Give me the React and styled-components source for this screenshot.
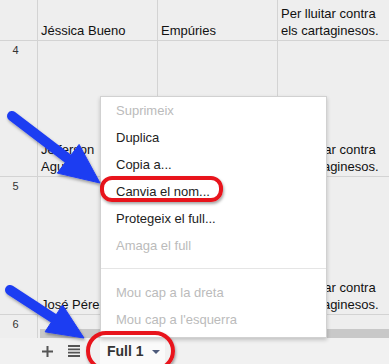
import React from 'react';
import styled, { createGlobalStyle } from 'styled-components';

const GlobalStyle = createGlobalStyle`
  html, body {
    margin: 0;
    padding: 0;
    overflow: hidden;
    background: #f1f1f1;
  }
  body {
    font-family: "Liberation Sans", Arial, sans-serif;
  }
`;

const Page = styled.div`
  position: relative;
  width: 389px;
  height: 364px;
  overflow: hidden;
  display: flex;
  flex-direction: column;
  background: #eeeeee;
`;

const Sheet = styled.div`
  display: grid;
  grid-template-columns: 38px 120px 120px 120px;
  grid-template-rows: ${({ rows }) => rows.map((h) => `${h}px`).join(' ')};
  width: 389px;
  overflow: hidden;
`;

const RowHead = styled.div`
  box-sizing: border-box;
  border-right: 1px solid #d3d3d3;
  border-bottom: 1px solid #d3d3d3;
  font-size: 11px;
  color: #333;
  text-align: center;
  padding: 3px 6px 0 0;
`;

const Cell = styled.div`
  box-sizing: border-box;
  border-right: 1px solid #d3d3d3;
  border-bottom: 1px solid #d3d3d3;
  font-size: 13px;
  line-height: 17px;
  color: #111;
  padding: 0 3px 1px 3px;
  display: flex;
  flex-direction: column;
  justify-content: flex-end;
  overflow: hidden;
`;

const ScrollRow = styled.div`
  display: flex;
  height: 9px;
`;

const Gutter = styled.div`
  width: 38px;
  box-sizing: border-box;
  border-right: 1px solid #d3d3d3;
`;

const Track = styled.div`
  flex: 1;
  margin-left: 2px;
  background: #c8c8c8;
`;

const TabBar = styled.div`
  flex: 1;
  display: flex;
  align-items: center;
  gap: 3px;
  background: #f1f1f1;
  padding-left: 35px;
`;

const BarIcon = styled.div`
  width: 24px;
  height: 26px;
  display: flex;
  align-items: center;
  justify-content: center;
  color: #555;
`;

const Tab = styled.div`
  margin-left: 11px;
  height: 26px;
  width: 65px;
  box-sizing: border-box;
  padding-left: 7px;
  background: #fafafa;
  display: flex;
  align-items: center;
  gap: 8px;
  font-size: 14px;
  font-weight: bold;
  color: #333;
`;

const Caret = styled.span`
  width: 0;
  height: 0;
  border-left: 4px solid transparent;
  border-right: 4px solid transparent;
  border-top: 4px solid #4d5a7a;
  margin-top: 2px;
`;

const Menu = styled.div`
  position: absolute;
  left: 100px;
  top: 96px;
  width: 227px;
  height: 242px;
  box-sizing: border-box;
  background: #fff;
  border: 1px solid rgba(0, 0, 0, 0.18);
  box-shadow: 0 2px 4px rgba(0, 0, 0, 0.2);
  padding: 0 0 5px;
`;

const Item = styled.div`
  height: 27px;
  line-height: 27px;
  padding-left: 15px;
  font-size: 13px;
  color: ${({ disabled }) => (disabled ? '#bbbbbb' : '#222')};
`;

const Separator = styled.div`
  border-top: 1px solid #e5e5e5;
  margin: 9px 0 10px;
`;

const Highlight = styled.div`
  position: absolute;
  left: ${({ x }) => x}px;
  top: ${({ y }) => y}px;
  width: ${({ w }) => w}px;
  height: ${({ h }) => h}px;
  box-sizing: border-box;
  border: 4px solid #e8141c;
  border-radius: ${({ r }) => r}px;
  box-shadow: 1px 2px 3px rgba(0, 0, 0, 0.35);
  pointer-events: none;
`;

const Overlay = styled.svg`
  position: absolute;
  left: 0;
  top: 0;
  pointer-events: none;
`;

const rows = [
  { n: '', h: 41, cells: [['Jéssica Bueno'], ['Empúries'], ['Per lluitar contra els cartaginesos.']] },
  { n: '4', h: 136, cells: [['Jefferson', 'Aguilar'], ['Empúries'], ['Per lluitar contra els cartaginesos.']] },
  { n: '5', h: 138, cells: [['José Pérez'], ['Empúries'], ['Per lluitar contra els cartaginesos.']] },
  { n: '6', h: 15, cells: [[], [], []] },
];

const menuTop = [
  { label: 'Suprimeix', disabled: true },
  { label: 'Duplica' },
  { label: 'Copia a...' },
  { label: 'Canvia el nom...' },
  { label: 'Protegeix el full...' },
  { label: 'Amaga el full', disabled: true },
];

const menuBottom = [
  { label: 'Mou cap a la dreta', disabled: true },
  { label: "Mou cap a l'esquerra", disabled: true },
];

const Arrow = ({ tail, tip, len, half, width }) => {
  const dx = tip[0] - tail[0];
  const dy = tip[1] - tail[1];
  const d = Math.hypot(dx, dy);
  const ux = dx / d;
  const uy = dy / d;
  const bx = tip[0] - ux * len;
  const by = tip[1] - uy * len;
  const px = -uy;
  const py = ux;
  const head = [
    [tip[0], tip[1]],
    [bx + px * half, by + py * half],
    [bx - px * half, by - py * half],
  ]
    .map((p) => p.join(','))
    .join(' ');
  return (
    <g fill="#1e3cf2" stroke="#1e3cf2" filter="url(#shade)">
      <line x1={tail[0]} y1={tail[1]} x2={bx + ux * 4} y2={by + uy * 4} strokeWidth={width} strokeLinecap="round" />
      <polygon points={head} strokeWidth="1" strokeLinejoin="round" />
    </g>
  );
};

export default function App() {
  return (
    <>
      <GlobalStyle />
      <Page>
        <Sheet rows={rows.map((r) => r.h)}>
          {rows.map((r, i) => (
            <React.Fragment key={i}>
              <RowHead>{r.n}</RowHead>
              {r.cells.map((lines, j) => (
                <Cell key={j}>
                  {lines.map((t, k) => (
                    <div key={k}>{t}</div>
                  ))}
                </Cell>
              ))}
            </React.Fragment>
          ))}
        </Sheet>
        <ScrollRow>
          <Gutter />
          <Track />
        </ScrollRow>
        <TabBar>
          <BarIcon>
            <svg width="11" height="11" viewBox="0 0 11 11">
              <path d="M5.5 0v11M0 5.5h11" stroke="#555" strokeWidth="2" />
            </svg>
          </BarIcon>
          <BarIcon>
            <svg width="12" height="12" viewBox="0 0 12 12">
              <path d="M0 1h12M0 4.3h12M0 7.6h12M0 11h12" stroke="#555" strokeWidth="1.8" />
            </svg>
          </BarIcon>
          <Tab>
            Full 1
            <Caret />
          </Tab>
        </TabBar>

        <Menu>
          {menuTop.map((m) => (
            <Item key={m.label} disabled={m.disabled}>
              {m.label}
            </Item>
          ))}
          <Separator />
          {menuBottom.map((m) => (
            <Item key={m.label} disabled={m.disabled}>
              {m.label}
            </Item>
          ))}
        </Menu>

        <Highlight x={100} y={176} w={123} h={26} r={12} />
        <Highlight x={86} y={331} w={89} h={40} r={20} />

        <Overlay width="389" height="364" viewBox="0 0 389 364">
          <defs>
            <filter id="shade" x="-20%" y="-20%" width="140%" height="140%">
              <feDropShadow dx="1" dy="2" stdDeviation="1.5" floodColor="#000" floodOpacity="0.35" />
            </filter>
          </defs>
          <Arrow tail={[12, 116]} tip={[100, 183]} len={40} half={18} width={10} />
          <Arrow tail={[10, 290]} tip={[84, 338]} len={36} half={16} width={10} />
        </Overlay>
      </Page>
    </>
  );
}
